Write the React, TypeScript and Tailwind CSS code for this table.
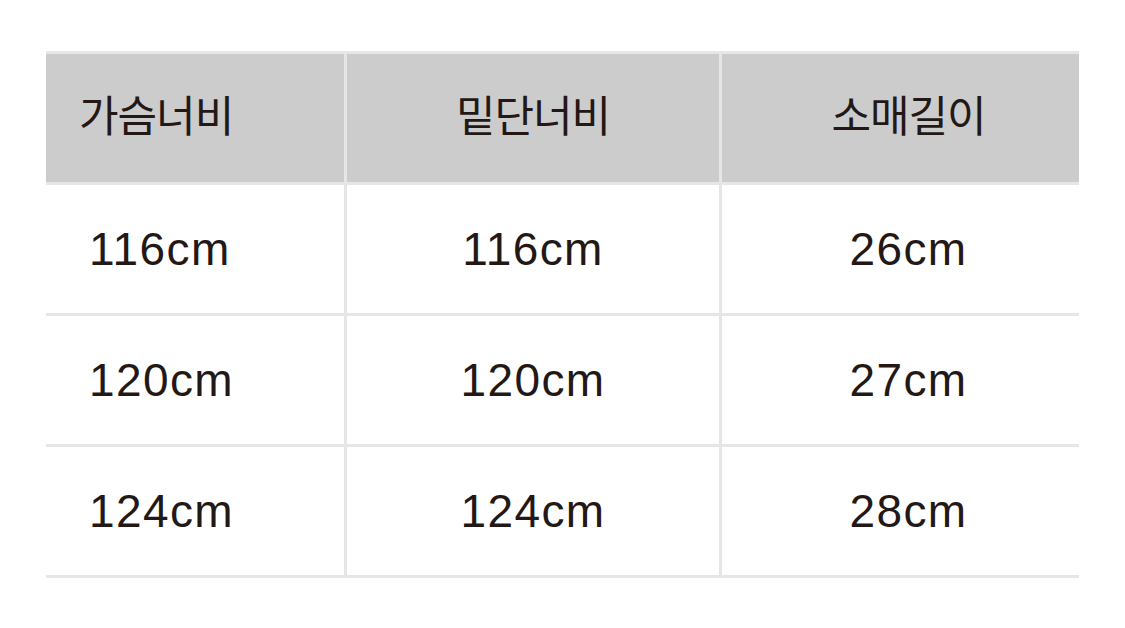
import React from 'react';

const headers = ['가슴너비', '밑단너비', '소매길이'];
const rows = [
  ['116cm', '116cm', '26cm'],
  ['120cm', '120cm', '27cm'],
  ['124cm', '124cm', '28cm'],
];

const font = { fontFamily: '"Liberation Sans", "Noto Sans CJK KR", sans-serif' };

const colClass = [
  'w-[298px] justify-start',
  'w-[375px] justify-center border-l-[3px] border-[#e6e6e6]',
  'w-[360px] justify-center border-l-[3px] border-[#e6e6e6] pl-[16px]',
];

export default function App() {
  return (
    <div className="w-[1125px] h-[628px] bg-white pt-[51px] pl-[46px]" style={font}>
      <div className="w-[1033px] border-t-[3px] border-[#e6e6e6] text-[#231815]">
        <div className="flex h-[131px] border-b-[3px] border-[#e6e6e6] bg-[#cccccc]">
          {headers.map((h, i) => (
            <div
              key={h}
              className={`flex items-center h-full pb-[2px] text-[43px] tracking-[-1px] ${colClass[i]} ${i === 0 ? 'pl-[33px]' : ''}`}
            >
              {h}
            </div>
          ))}
        </div>
        {rows.map((r, ri) => (
          <div key={ri} className="flex h-[131px] border-b-[3px] border-[#e6e6e6]">
            {r.map((c, i) => (
              <div
                key={i}
                className={`flex items-center h-full text-[46px] tracking-[1.4px] ${colClass[i]} ${i === 0 ? 'pl-[43px]' : ''}`}
              >
                {c}
              </div>
            ))}
          </div>
        ))}
      </div>
    </div>
  );
}
